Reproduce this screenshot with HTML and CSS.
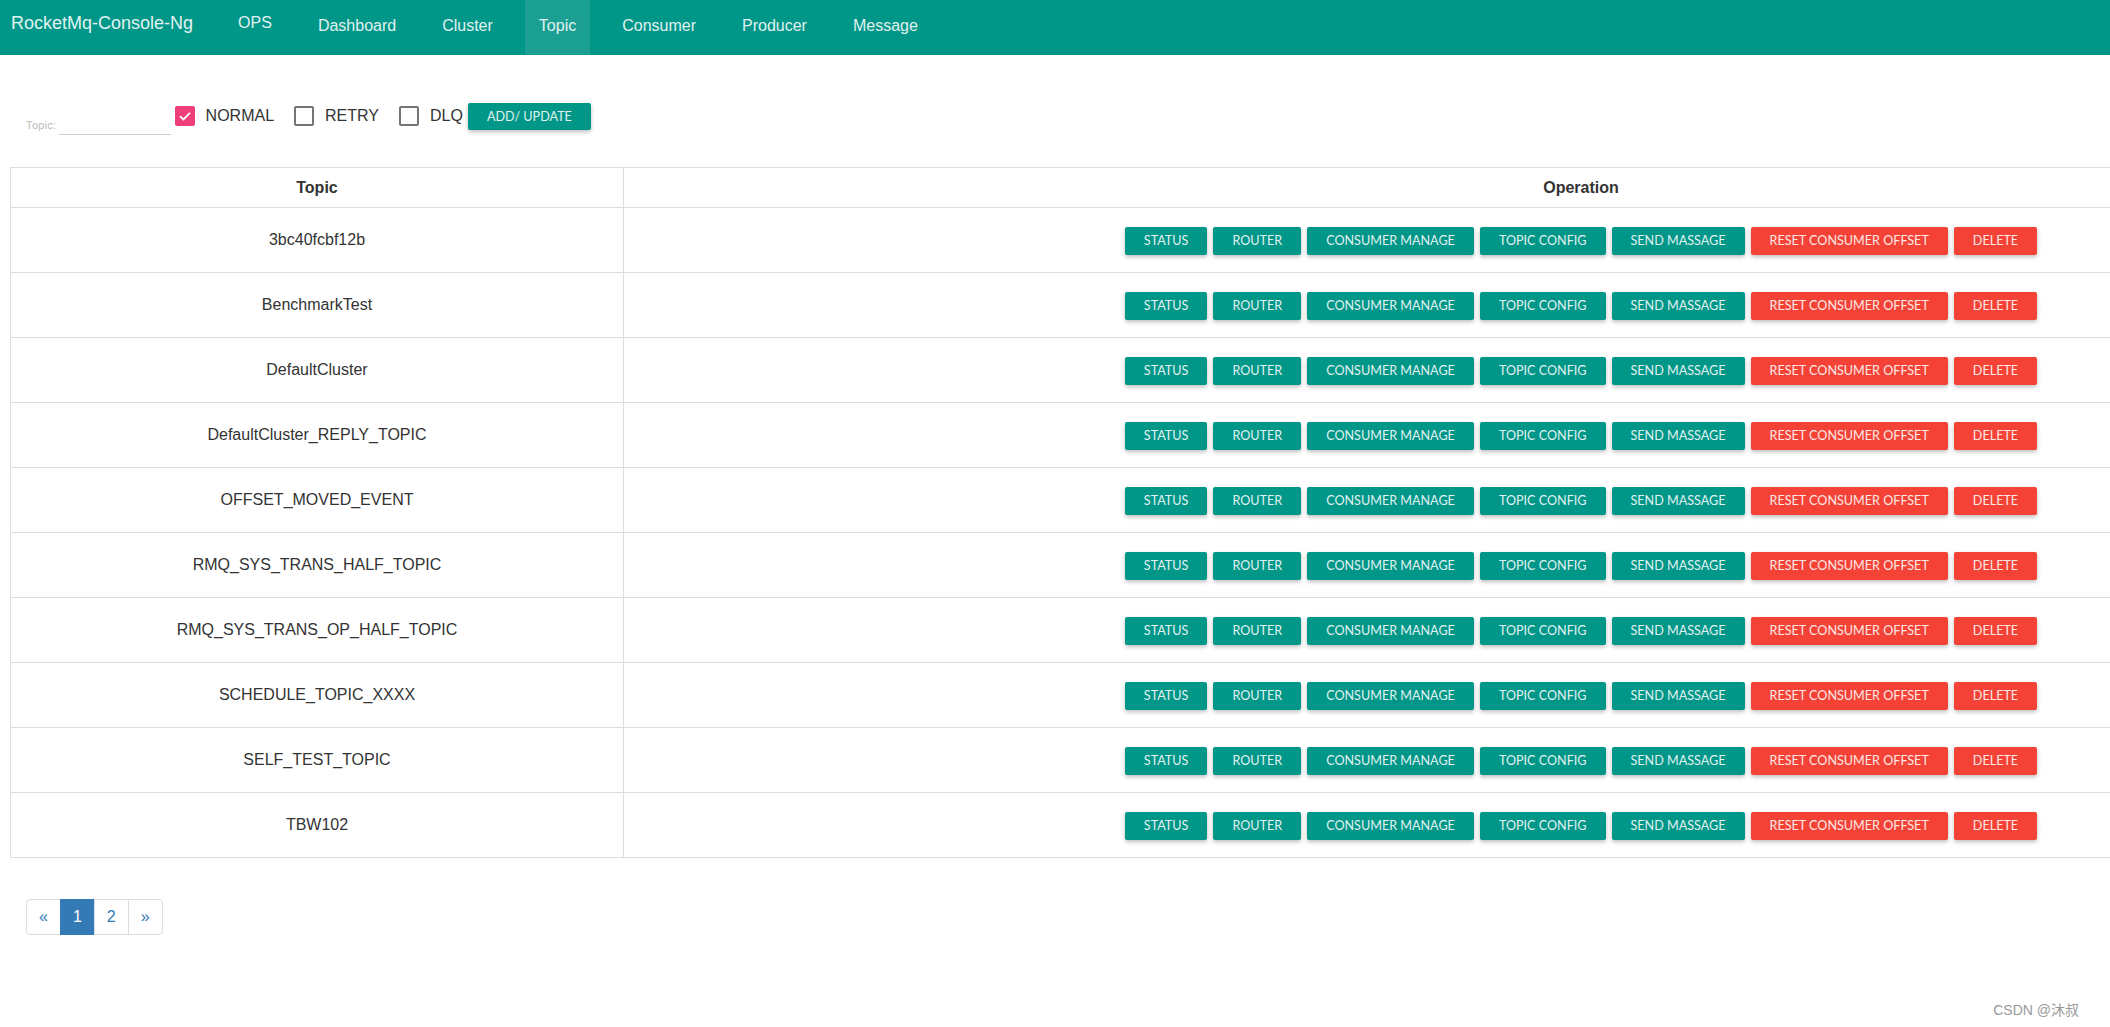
FILE: index.html
```html
<!DOCTYPE html>
<html>
<head>
<meta charset="utf-8">
<title>RocketMq-Console-Ng</title>
<link rel="stylesheet" href="styles.css">
</head>
<body>
<nav class="navbar">
  <a class="brand">RocketMq-Console-Ng</a>
  <a class="nav-link ops">OPS</a>
  <a class="nav-link">Dashboard</a>
  <a class="nav-link">Cluster</a>
  <a class="nav-link active">Topic</a>
  <a class="nav-link">Consumer</a>
  <a class="nav-link">Producer</a>
  <a class="nav-link">Message</a>
</nav>

<section class="filters">
  <div class="topic-field">
    <span class="field-label">Topic:</span>
    <input class="field-input" type="text">
  </div>
  <label class="check">
    <span class="box checked"><svg viewBox="0 0 20 20" width="20" height="20"><path d="M5 10.2 L8.4 13.4 L15 6.8" fill="none" stroke="#fff" stroke-width="1.8"/></svg></span>
    <span class="check-text">NORMAL</span>
  </label>
  <label class="check">
    <span class="box"></span>
    <span class="check-text">RETRY</span>
  </label>
  <label class="check">
    <span class="box"></span>
    <span class="check-text">DLQ</span>
  </label>
  <button class="btn btn-add">ADD/ UPDATE</button>
</section>

<table class="topics">
  <thead>
    <tr><th class="col-topic">Topic</th><th class="col-op">Operation</th></tr>
  </thead>
  <tbody id="rows"></tbody>
</table>

<ul class="pagination">
  <li><a class="page">&laquo;</a></li>
  <li><a class="page current">1</a></li>
  <li><a class="page">2</a></li>
  <li><a class="page">&raquo;</a></li>
</ul>

<div class="watermark">CSDN @沐叔</div>

<script src="app.js"></script>
</body>
</html>
```

FILE: app.js
```js
var topics = ["3bc40fcbf12b","BenchmarkTest","DefaultCluster","DefaultCluster_REPLY_TOPIC","OFFSET_MOVED_EVENT","RMQ_SYS_TRANS_HALF_TOPIC","RMQ_SYS_TRANS_OP_HALF_TOPIC","SCHEDULE_TOPIC_XXXX","SELF_TEST_TOPIC","TBW102"];
var ops = [["STATUS",""],["ROUTER",""],["CONSUMER MANAGE",""],["TOPIC CONFIG",""],["SEND MASSAGE",""],["RESET CONSUMER OFFSET","btn-red"],["DELETE","btn-red"]];
var tb = document.getElementById("rows");
topics.forEach(function (t) {
  var tr = document.createElement("tr");
  var td1 = document.createElement("td");
  td1.className = "cell-topic";
  td1.textContent = t;
  var td2 = document.createElement("td");
  td2.className = "cell-op";
  var wrap = document.createElement("div");
  wrap.className = "ops";
  ops.forEach(function (o) {
    var b = document.createElement("button");
    b.className = "btn " + o[1];
    b.textContent = o[0];
    wrap.appendChild(b);
  });
  td2.appendChild(wrap);
  tr.appendChild(td1);
  tr.appendChild(td2);
  tb.appendChild(tr);
});
```

FILE: styles.css
```css
html, body {
  margin: 0;
  padding: 0;
}
body {
  font-family: "Liberation Sans", Arial, sans-serif;
  color: #333;
  background: #fff;
  overflow: hidden;
  min-height: 1027px;
  position: relative;
}

/* navbar */
.navbar {
  display: flex;
  height: 55px;
  background: #009688;
  align-items: flex-start;
}
.brand {
  display: block;
  height: 55px;
  box-sizing: border-box;
  padding: 13px 0 0 11px;
  font-size: 18px;
  line-height: 20px;
  color: #e0f2f1;
  margin-right: 13px;
}
.nav-link {
  display: block;
  height: 55px;
  box-sizing: border-box;
  padding: 16px 14px 0;
  margin-left: 18px;
  font-size: 16px;
  line-height: 19px;
  color: #e0f2f1;
}
.nav-link.ops {
  padding-top: 13px;
}
.nav-link.active {
  background: #1a9f92;
}

/* filters */
.filters {
  display: flex;
  align-items: flex-start;
  margin-top: 45px;
  padding-left: 26px;
  height: 35px;
}
.topic-field {
  display: flex;
  align-items: flex-end;
  height: 35px;
}
.field-label {
  font-family: Roboto, "Liberation Sans", sans-serif;
  font-size: 11px;
  line-height: 13px;
  color: #bbb;
  padding-bottom: 3px;
  margin-right: 3px;
}
.field-input {
  width: 112px;
  height: 20px;
  box-sizing: border-box;
  border: none;
  border-bottom: 1px solid #ccc;
  outline: none;
  padding: 0;
  margin: 0;
  background: transparent;
}
.check {
  display: flex;
  align-items: flex-start;
  margin-left: 4px;
  margin-right: 16px;
}
.check:last-of-type {
  margin-right: 5px;
}
.box {
  display: block;
  width: 20px;
  height: 20px;
  box-sizing: border-box;
  border: 2px solid #757575;
  border-radius: 2px;
  margin-top: 6px;
}
.box.checked {
  background: #ee3f7b;
  border: none;
}
.box svg {
  display: block;
}
.check-text {
  margin-left: 11px;
  margin-top: 6px;
  font-size: 16px;
  line-height: 20px;
  color: #333;
}

/* buttons */
.btn {
  display: inline-block;
  height: 28px;
  padding: 0 19px;
  border: none;
  border-radius: 2px;
  background: #009688;
  color: #e0f2f1;
  font-family: Lato, "Liberation Sans", sans-serif;
  font-size: 12.6px;
  line-height: 28px;
  white-space: nowrap;
  box-shadow: 0 2px 4px 0 rgba(0, 0, 0, 0.26);
  cursor: pointer;
}
.btn-red {
  background: #f44336;
  color: #fde8e6;
}
.btn-add {
  margin-top: 3px;
  height: 27px;
  line-height: 27px;
  padding: 0 19px;
  font-size: 12.6px;
}

/* table */
.topics {
  margin: 32px 0 0 10px;
  width: 2529px;
  border-collapse: collapse;
  border: 1px solid #ddd;
}
.topics th, .topics td {
  border: 1px solid #ddd;
  text-align: center;
  vertical-align: middle;
  padding: 0;
}
.topics th {
  height: 39px;
  font-size: 16px;
  font-weight: bold;
  color: #333;
}
.col-topic {
  width: 612px;
}
.topics td {
  height: 64px;
  font-size: 16px;
  color: #333;
}
.cell-topic {
  padding-bottom: 2px;
}
.ops {
  display: flex;
  justify-content: center;
  gap: 6px;
  padding-top: 1px;
}

/* pagination */
.pagination {
  display: flex;
  list-style: none;
  margin: 41px 0 0 26px;
  padding: 0;
}
.page {
  display: block;
  padding: 6px 12px;
  font-size: 16px;
  line-height: 22px;
  color: #337ab7;
  border: 1px solid #ddd;
  margin-left: -1px;
  background: #fff;
}
.pagination li:first-child .page {
  margin-left: 0;
  border-radius: 4px 0 0 4px;
}
.pagination li:last-child .page {
  border-radius: 0 4px 4px 0;
}
.page.current {
  background: #337ab7;
  border-color: #337ab7;
  color: #fff;
}

.watermark {
  position: absolute;
  right: 31px;
  bottom: 8px;
  font-family: "Liberation Sans", "Noto Sans CJK SC", sans-serif;
  font-size: 14px;
  color: #999;
}
```
